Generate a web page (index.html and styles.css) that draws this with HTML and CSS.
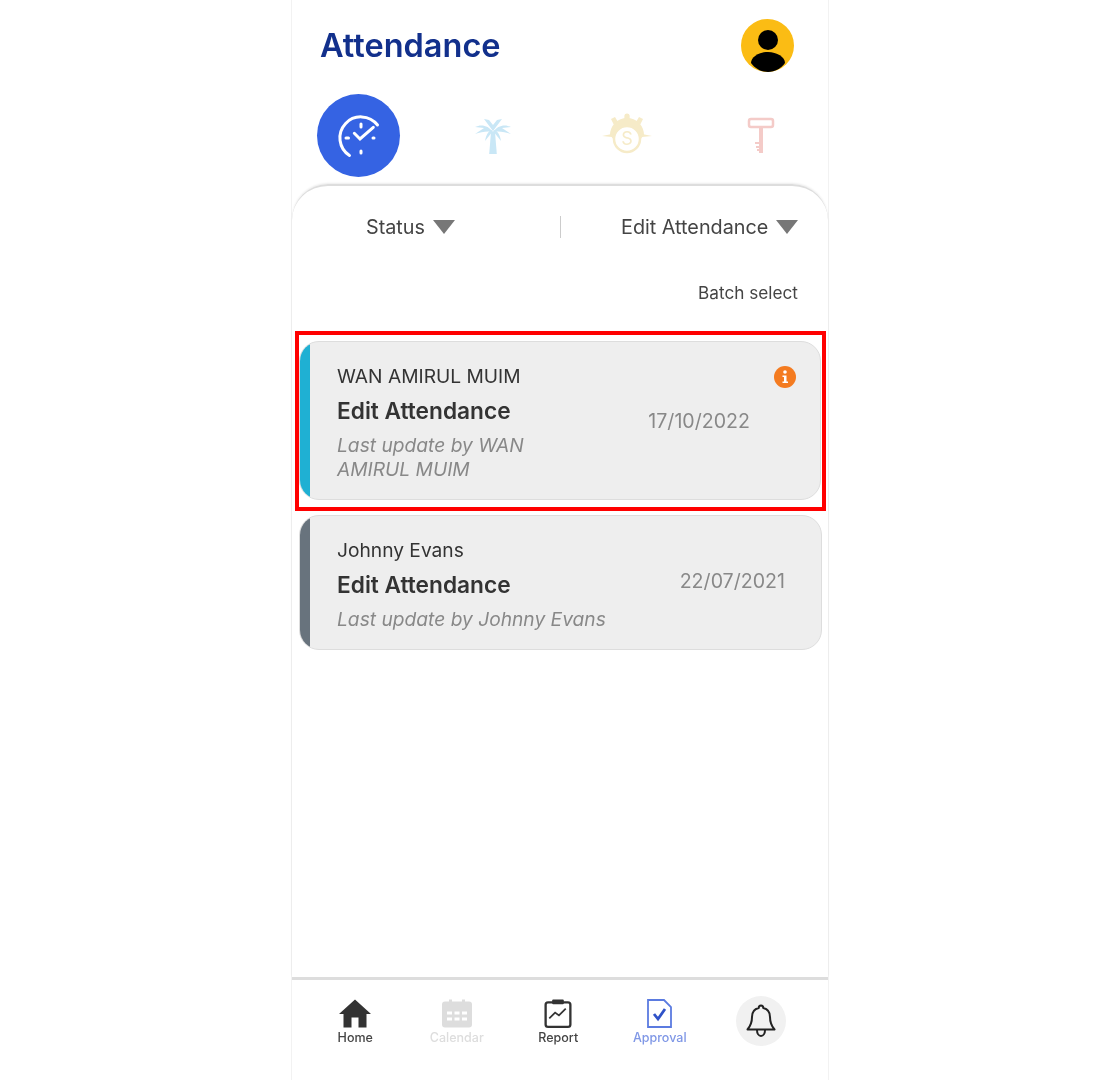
FILE: index.html
```html
<!DOCTYPE html>
<html lang="en">
<head>
    <meta charset="UTF-8">
    <meta name="viewport" content="width=device-width, initial-scale=1.0">
    <title>Attendance</title>
    <link rel="stylesheet" href="styles.css">
</head>
<body>
    <div class="phone">
        <header class="top">
            <h1>Attendance</h1>
            <svg class="avatar" viewBox="0 0 53 53">
                <circle cx="26.5" cy="26.5" r="26.5" fill="#fbbc14"/>
                <circle cx="27" cy="21" r="10" fill="#000"/>
                <path d="M10 44c0-6 8-11 17-11s17 5 17 11c-4 5.500-10 9-17 9S14 49.500 10 44z" fill="#000"/>
            </svg>
        </header>

        <div class="tabs">
            <div class="tab tab-first">
                <span class="tab-active">
                    <svg viewBox="0 0 83 83" width="83" height="83" fill="none" stroke="#fff" stroke-width="3" stroke-linecap="round">
                        <path d="M60.500 31A21 21 0 1 0 32.500 61.500"/>
                        <path d="M44 30v3M29 44h2.500M56 44h1M44 57v2"/>
                        <path d="M37.300 39.300L43 45 56.300 33.300"/>
                    </svg>
                </span>
            </div>
            <div class="tab">
                <svg viewBox="0 0 40 40" width="40" height="40" fill="#c9e7f6">
                    <path d="M18 16h4l1.800 22h-7.600z"/>
                    <path d="M20 15L11 3l5 1 4 5 4-5 5-1z"/>
                    <path d="M20 16C15 9 8 8 2 11l9 1-9 6c6-2 12-3 18-2z"/>
                    <path d="M20 16c5-7 12-8 18-5l-9 1 9 6c-6-2-12-3-18-2z"/>
                    <path d="M20 15l-8 10c1-6 3-9 6-11zM20 15l8 10c-1-6-3-9-6-11z"/>
                </svg>
            </div>
            <div class="tab">
                <svg viewBox="0 0 50 46" width="50" height="46">
                    <g fill="#f6ebc8">
                        <path d="M8 22a17 17 0 0 1 34 0l-4 5H12z"/>
                        <circle cx="25" cy="3" r="2.500"/>
                        <path d="M23 1h4l1 6h-6zM9 6l4-2 3 5-4 3zM41 6l-4-2-3 5 4 3z"/>
                        <path d="M0 23l10-2v3zM50 23l-10-2v3z"/>
                    </g>
                    <circle cx="25" cy="26" r="13" fill="#fff" stroke="#f6ebc8" stroke-width="2.500"/>
                    <text x="25" y="32" class="coin">S</text>
                </svg>
            </div>
            <div class="tab">
                <svg viewBox="0 0 30 40" width="30" height="40" fill="none" stroke="#f4cbc8" stroke-width="2.500">
                    <rect x="3" y="3" width="24" height="8" rx="2"/>
                    <path d="M15 11v26" stroke-width="4"/>
                    <path d="M9 27h5M10 31h4M11 34h3" stroke-width="2"/>
                </svg>
            </div>
        </div>

        <main class="panel">
            <div class="filters">
                <div class="filter filter-status">Status <span class="caret"></span></div>
                <div class="filter-line"></div>
                <div class="filter filter-type">Edit Attendance <span class="caret"></span></div>
            </div>
            <div class="batch">Batch select</div>

            <div class="marked">
                <div class="card card-wide">
                    <div class="card-bar bar-blue"></div>
                    <div class="card-body">
                        <div class="card-name">WAN AMIRUL MUIM</div>
                        <div class="card-title">Edit Attendance</div>
                        <div class="card-note">Last update by WAN<br>AMIRUL MUIM</div>
                    </div>
                    <div class="card-date">17/10/2022</div>
                    <svg class="info" viewBox="0 0 22 22">
                        <circle cx="11" cy="11" r="11" fill="#f47b20"/>
                        <circle cx="11" cy="6" r="1.800" fill="#fff"/>
                        <path d="M8.500 9.500H12.500V15.500H14V17H8.500V15.500H10V11H8.500z" fill="#fff"/>
                    </svg>
                </div>
            </div>

            <div class="card card-plain">
                <div class="card-bar bar-grey"></div>
                <div class="card-body">
                    <div class="card-name">Johnny Evans</div>
                    <div class="card-title">Edit Attendance</div>
                    <div class="card-note">Last update by Johnny Evans</div>
                </div>
                <div class="card-date">22/07/2021</div>
            </div>
        </main>

        <nav class="nav">
            <div class="nav-item">
                <svg viewBox="0 0 32 28" width="32" height="28">
                    <path d="M16 0L32 14.500H27.500V28H19.500V18H12.500V28H4.500V14.500H0z" fill="#333"/>
                </svg>
                <span class="nav-home">Home</span>
            </div>
            <div class="nav-item">
                <svg viewBox="0 0 30 28" width="30" height="28">
                    <path d="M3 2h4V0h3v2h10V0h3v2h4a3 3 0 0 1 3 3v20a3 3 0 0 1-3 3H3a3 3 0 0 1-3-3V5a3 3 0 0 1 3-3z" fill="#ddd"/>
                    <path d="M5 12h5v3H5zM12.500 12h5v3h-5zM20 12h5v3h-5zM5 18h5v3H5zM12.500 18h5v3h-5zM20 18h5v3h-5z" fill="#fff"/>
                </svg>
                <span class="nav-off">Calendar</span>
            </div>
            <div class="nav-item">
                <svg viewBox="0 0 28 30" width="28" height="30" fill="none" stroke="#333" stroke-width="2.400">
                    <rect x="1.200" y="3.500" width="25.600" height="25.300" rx="2.500"/>
                    <rect x="8" y="0.500" width="12" height="5" rx="1" fill="#333" stroke="none"/>
                    <path d="M5 20l6-6 4 3 7-7" stroke-width="1.800"/>
                </svg>
                <span class="nav-report">Report</span>
            </div>
            <div class="nav-item">
                <svg viewBox="0 0 25 29" width="25" height="29" fill="none" stroke="#5b7be0" stroke-width="1.800">
                    <path d="M1 1h16l7 7v20H1z"/>
                    <path d="M7 15l4 5 7-10" stroke="#2f52c8" stroke-width="2.800"/>
                </svg>
                <span class="nav-on">Approval</span>
            </div>
            <div class="nav-item">
                <span class="bell">
                    <svg viewBox="0 0 30 34" width="30" height="34" fill="none" stroke="#222" stroke-width="2" stroke-linejoin="round">
                        <path d="M15 1.500c1.500 0 2.300 1 2.300 2.500 4.500 1 6.700 4.500 6.700 9 0 6 1.500 9 4.500 12.500H1.500C4.500 22 6 19 6 13c0-4.500 2.200-8 6.700-9 0-1.500.8-2.500 2.300-2.500z"/>
                        <path d="M11 26c0 3.500 1.700 6 4 6s4-2.500 4-6"/>
                    </svg>
                </span>
            </div>
        </nav>
    </div>
</body>
</html>
```

FILE: styles.css
```css
body {
    font-family: Inter, "Liberation Sans", sans-serif;
    background-color: #fff;
    margin: 0;
    padding: 0;
}
.phone {
    width: 536px;
    height: 1080px;
    margin: 0 auto;
    border-left: 1px solid #f2f2f2;
    border-right: 1px solid #f2f2f2;
    display: flex;
    flex-direction: column;
    filter: blur(0.4px);
}
.top {
    height: 90px;
    display: flex;
    justify-content: space-between;
    align-items: center;
    padding: 0 34px 0 28px;
}
.top h1 {
    margin: 0;
    font-size: 32.500px;
    font-weight: 600;
    color: #12308c;
}
.avatar {
    width: 53px;
    height: 53px;
}
.tabs {
    display: grid;
    grid-template-columns: repeat(4, 134px);
    height: 83px;
    margin-top: 4px;
}
.tab {
    display: flex;
    justify-content: center;
    align-items: center;
}
.tab-first {
    padding-right: 2px;
}
.tab-active {
    width: 83px;
    height: 83px;
    border-radius: 50%;
    background: #3563e3;
    display: block;
}
.coin {
    font-size: 18px;
    fill: #f6ebc8;
    text-anchor: middle;
}
.panel {
    flex: 1;
    margin-top: 7px;
    border-top: 2px solid #ddd;
    border-radius: 36px 36px 0 0;
    box-shadow: 0 -1px 2px rgba(0,0,0,0.08);
}
.filters {
    height: 22px;
    margin-top: 30px;
    display: flex;
    align-items: center;
    color: #444;
    font-size: 19.800px;
}
.filter {
    display: flex;
    align-items: center;
    gap: 8px;
    white-space: nowrap;
}
.filter-status {
    width: 194px;
    padding-left: 74px;
}
.filter-type {
    padding-left: 60px;
}
.filter-line {
    width: 1px;
    height: 22px;
    background: #ccc;
}
.caret {
    width: 0;
    height: 0;
    border-left: 11px solid transparent;
    border-right: 11px solid transparent;
    border-top: 14px solid #777;
}
.batch {
    margin-top: 43px;
    padding-right: 30px;
    text-align: right;
    font-size: 17.200px;
    line-height: 24px;
    color: #444;
}
.marked {
    margin: 26px 2px 0 3px;
    padding: 6px 1px 7px 0;
    border: 4px solid #f00;
}
.card {
    position: relative;
    display: flex;
    align-items: center;
    box-sizing: border-box;
    overflow: hidden;
    background: #eee;
    border: 1px solid #ddd;
    border-radius: 20px;
    align-self: stretch;
}
.card-wide {
    height: 159px;
    padding-right: 70px;
}
.card-plain {
    height: 135px;
    margin: 4px 6px 0 7px;
    padding-right: 36px;
}
.card-plain .card-date {
    margin-bottom: 3px;
}
.card-bar {
    width: 11px;
    align-self: stretch;
    margin-left: -1px;
    margin-top: -1px;
    margin-bottom: -1px;
}
.bar-blue {
    background: #1fb0d3;
}
.bar-grey {
    background: #68737d;
}
.card-body {
    padding: 22px 0 18px 27px;
    align-self: flex-start;
    white-space: nowrap;
}
.card-name {
    font-size: 19.200px;
    line-height: 24px;
    color: #333;
}
.card-title {
    margin-top: 8px;
    font-size: 22.700px;
    line-height: 30px;
    font-weight: 600;
    color: #333;
}
.card-note {
    margin-top: 7px;
    font-size: 19.200px;
    line-height: 24px;
    font-style: italic;
    color: #888;
}
.card-date {
    margin-left: auto;
    font-size: 19.600px;
    color: #888;
}
.info {
    position: absolute;
    top: 24px;
    right: 24px;
    width: 22px;
    height: 22px;
}
.nav {
    height: 103px;
    border-top: 3px solid #ddd;
    display: grid;
    grid-template-columns: repeat(5, 101.500px);
    padding-left: 12.500px;
    box-sizing: border-box;
}
.nav-item {
    display: flex;
    flex-direction: column;
    align-items: center;
    padding-top: 19px;
    font-size: 12.500px;
    font-weight: 500;
}
.nav-item > svg {
    height: 29px;
}
.nav-item span {
    margin-top: 2px;
}
.nav-home,
.nav-report {
    color: #444;
}
.nav-off {
    color: #ddd;
}
.nav-on {
    color: #7f97e6;
}
.nav-item .bell {
    width: 50px;
    height: 50px;
    margin-top: -3px;
    border-radius: 50%;
    background: #f1f1f1;
    display: flex;
    justify-content: center;
    align-items: center;
}
```
